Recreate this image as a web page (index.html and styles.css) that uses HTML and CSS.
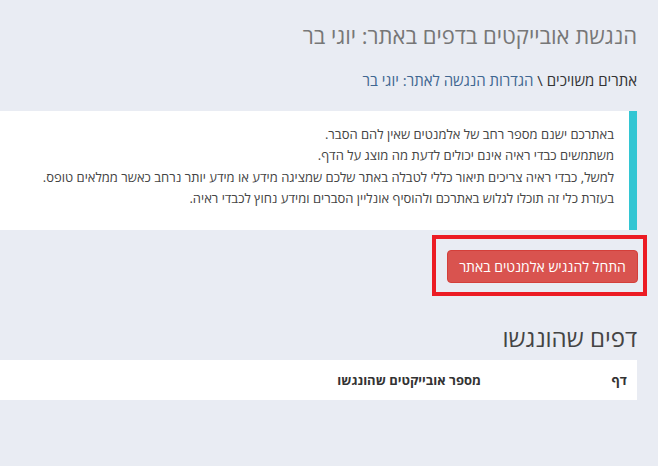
FILE: index.html
```html
<!DOCTYPE html>
<html lang="he" dir="rtl">
<head>
<meta charset="utf-8">
<link rel="stylesheet" href="styles.css">
</head>
<body>
<main class="page">
  <h1 class="title">הנגשת אובייקטים בדפים באתר: יוגי בר</h1>
  <div class="breadcrumb"><span class="crumb">אתרים משויכים</span> \ <a class="crumb-link" href="#">הגדרות הנגשה לאתר: יוגי בר</a></div>
  <div class="alert">
    <p>באתרכם ישנם מספר רחב של אלמנטים שאין להם הסבר.</p>
    <p>משתמשים כבדי ראיה אינם יכולים לדעת מה מוצג על הדף.</p>
    <p>למשל, כבדי ראיה צריכים תיאור כללי לטבלה באתר שלכם שמציגה מידע או מידע יותר נרחב כאשר ממלאים טופס.</p>
    <p>בעזרת כלי זה תוכלו לגלוש באתרכם ולהוסיף אונליין הסברים ומידע נחוץ לכבדי ראיה.</p>
  </div>
  <div class="actions">
    <div class="highlight">
      <button class="btn-danger">התחל להנגיש אלמנטים באתר</button>
    </div>
  </div>
  <h2 class="section-title">דפים שהונגשו</h2>
  <table class="pages-table">
    <thead>
      <tr><th class="col-page">דף</th><th>מספר אובייקטים שהונגשו</th></tr>
    </thead>
  </table>
</main>
</body>
</html>
```
FILE: styles.css
```css
html, body {
  margin: 0;
  padding: 0;
}
body {
  background: #e9ecf3;
  font-family: "Open Sans", "DejaVu Sans", sans-serif;
  color: #444;
  direction: rtl;
  width: 658px;
  height: 466px;
  overflow: hidden;
}
.page {
  padding: 0 21px 0 0;
}
.title {
  margin: 0;
  padding-top: 21px;
  font-size: 22px;
  line-height: 28px;
  font-weight: 400;
  color: #777;
}
.breadcrumb {
  margin-top: 22px;
  font-size: 15px;
  line-height: 18px;
  color: #333;
}
.crumb-link {
  color: #3f6691;
  text-decoration: none;
}
.alert {
  margin-top: 22px;
  background: #fff;
  border-right: 8px solid #33c6d3;
  padding: 13px 15px 14px 12px;
  font-size: 13px;
  line-height: 21.3px;
  color: #444;
  height: 92px;
}
.alert p {
  margin: 0;
}
.actions {
  display: flex;
  margin-top: 5px;
}
.highlight {
  border: 4px solid #ec1c24;
  padding: 11px 5px 9px 11px;
  margin-right: -10px;
}
.btn-danger {
  display: block;
  width: 191px;
  height: 33px;
  background: #d9534f;
  border: 1px solid #d43f3a;
  border-radius: 4px;
  color: #fff;
  font-family: inherit;
  font-size: 14px;
  padding: 0;
}
.section-title {
  margin: 0;
  margin-top: 27px;
  font-size: 24px;
  line-height: 30px;
  font-weight: 400;
  color: #444;
}
.pages-table {
  margin-top: 7px;
  width: 100%;
  border-collapse: collapse;
  background: #fff;
}
.pages-table th {
  height: 40px;
  padding: 0 10px;
  text-align: right;
  font-size: 13px;
  font-weight: 700;
  color: #333;
}
.pages-table .col-page {
  width: 126px;
}
```
